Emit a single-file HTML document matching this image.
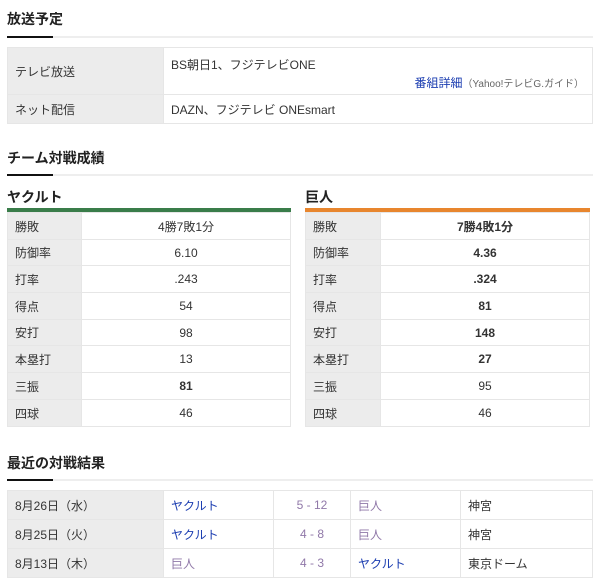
<!DOCTYPE html>
<html><head><meta charset="utf-8"><style>
*{margin:0;padding:0;box-sizing:border-box}
body{width:600px;height:579px;background:#fff;font-family:"Liberation Sans","Noto Sans CJK JP",sans-serif;color:#333;font-size:12px;position:relative;overflow:hidden}
.h{position:absolute;left:7px;font-size:14px;font-weight:bold;color:#222}
.ul{position:absolute;left:7px;width:586px;height:2px;background:#eee}
.ul:before{content:"";position:absolute;left:0;top:0;width:46px;height:2px;background:#111}
table{position:absolute;border-collapse:collapse;table-layout:fixed}
td{border:1px solid #e6e6e6;padding:0 7px;vertical-align:middle}
td.l{background:#ececec}
.c{text-align:center}
.b{font-weight:bold}
.bl{color:#1a3cb0}
.pu{color:#9078a8}
</style></head><body>
<div class="h" style="top:9px">放送予定</div>
<div class="ul" style="top:36px"></div>
<table style="left:7px;top:47px;width:586px">
<tr style="height:47px"><td class="l" style="width:156px">テレビ放送</td><td style="position:relative"><div style="position:absolute;top:8px;left:7px">BS朝日1、フジテレビONE</div><div style="position:absolute;top:26px;right:8px"><span class="bl">番組詳細</span><span style="font-size:10px;color:#666">（Yahoo!テレビG.ガイド）</span></div></td></tr>
<tr style="height:29px"><td class="l">ネット配信</td><td>DAZN、フジテレビ ONEsmart</td></tr>
</table>
<div class="h" style="top:148px">チーム対戦成績</div>
<div class="ul" style="top:174px"></div>
<div class="h" style="top:187px">ヤクルト</div>
<div class="h" style="top:187px;left:305px">巨人</div>
<div style="position:absolute;left:7px;top:208px;width:284px;height:4px;background:#3a7d4a"></div>
<div style="position:absolute;left:305px;top:208px;width:285px;height:4px;background:#e8862e"></div>
<table style="left:7px;top:212px;width:284px">
<tr style="height:27px"><td class="l" style="width:74px">勝敗</td><td class="c">4勝7敗1分</td></tr>
<tr style="height:26px"><td class="l">防御率</td><td class="c">6.10</td></tr>
<tr style="height:27px"><td class="l">打率</td><td class="c">.243</td></tr>
<tr style="height:27px"><td class="l">得点</td><td class="c">54</td></tr>
<tr style="height:26px"><td class="l">安打</td><td class="c">98</td></tr>
<tr style="height:27px"><td class="l">本塁打</td><td class="c">13</td></tr>
<tr style="height:27px"><td class="l">三振</td><td class="c b">81</td></tr>
<tr style="height:27px"><td class="l">四球</td><td class="c">46</td></tr>
</table>
<table style="left:305px;top:212px;width:285px">
<tr style="height:27px"><td class="l" style="width:75px">勝敗</td><td class="c b">7勝4敗1分</td></tr>
<tr style="height:26px"><td class="l">防御率</td><td class="c b">4.36</td></tr>
<tr style="height:27px"><td class="l">打率</td><td class="c b">.324</td></tr>
<tr style="height:27px"><td class="l">得点</td><td class="c b">81</td></tr>
<tr style="height:26px"><td class="l">安打</td><td class="c b">148</td></tr>
<tr style="height:27px"><td class="l">本塁打</td><td class="c b">27</td></tr>
<tr style="height:27px"><td class="l">三振</td><td class="c">95</td></tr>
<tr style="height:27px"><td class="l">四球</td><td class="c">46</td></tr>
</table>
<div class="h" style="top:453px">最近の対戦結果</div>
<div class="ul" style="top:479px"></div>
<table style="left:7px;top:490px;width:586px">
<tr style="height:29px"><td class="l" style="width:156px">8月26日（水）</td><td class="bl" style="width:110px">ヤクルト</td><td class="c pu" style="width:77px">5 - 12</td><td class="pu" style="width:110px">巨人</td><td>神宮</td></tr>
<tr style="height:29px"><td class="l">8月25日（火）</td><td class="bl">ヤクルト</td><td class="c pu">4 - 8</td><td class="pu">巨人</td><td>神宮</td></tr>
<tr style="height:29px"><td class="l">8月13日（木）</td><td class="pu">巨人</td><td class="c pu">4 - 3</td><td class="bl">ヤクルト</td><td>東京ドーム</td></tr>
</table>
</body></html>
